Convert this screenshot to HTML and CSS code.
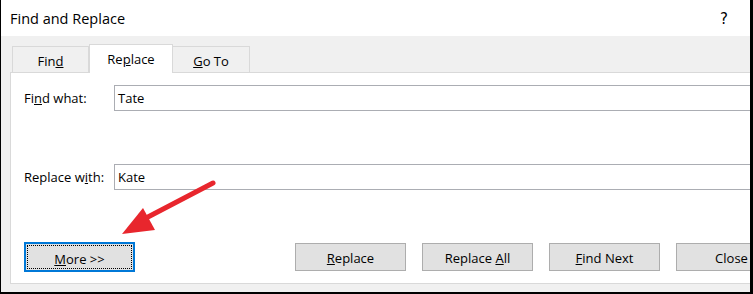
FILE: index.html
```html
<!DOCTYPE html>
<html>
<head>
    <title>Find and Replace</title>
    <link rel="stylesheet" href="styles.css">
</head>
<body>
    <div class="window">
        <div class="titlebar">
            <span class="title">Find and Replace</span>
            <span class="help">?</span>
        </div>
        <div class="content">
            <div class="tabs">
                <div class="tab">Fin<u>d</u></div>
                <div class="tab active">Re<u>p</u>lace</div>
                <div class="tab"><u>G</u>o To</div>
            </div>
            <div class="panel">
                <div class="row first">
                    <label class="label">Fi<u>n</u>d what:</label>
                    <div class="field">Tate</div>
                </div>
                <div class="row second">
                    <label class="label">Replace w<u>i</u>th:</label>
                    <div class="field">Kate</div>
                </div>
                <div class="buttons">
                    <button class="btn more"><span class="focus"><u>M</u>ore &gt;&gt;</span></button>
                    <div class="actions">
                        <button class="btn"><u>R</u>eplace</button>
                        <button class="btn">Replace <u>A</u>ll</button>
                        <button class="btn"><u>F</u>ind Next</button>
                        <button class="btn">Close</button>
                    </div>
                </div>
            </div>
        </div>
        <svg class="arrow" width="753" height="294" viewBox="0 0 753 294">
            <line x1="213" y1="183" x2="146" y2="218" stroke="#e8262d" stroke-width="5" stroke-linecap="round"/>
            <polygon points="122,234 143,208 155,230" fill="#e8262d"/>
        </svg>
    </div>
</body>
</html>
```

FILE: styles.css
```css
body {
    margin: 0;
    font-family: "Open Sans", "Noto Sans", sans-serif;
    color: #000;
}

.window {
    position: relative;
    width: 753px;
    height: 294px;
    box-sizing: border-box;
    border-left: 1px solid #000;
    border-right: 3px solid #000;
    border-bottom: 2px solid #000;
    background-color: #f0f0f0;
    overflow: hidden;
}

.titlebar {
    display: flex;
    align-items: center;
    justify-content: space-between;
    height: 36px;
    background-color: #fff;
    padding: 0 22px 0 9px;
}

.title {
    font-size: 14.5px;
}

.help {
    font-size: 15px;
    font-family: "DejaVu Sans", sans-serif;
    margin-top: 1px;
}

.content {
    padding: 8px 0 0 9px;
}

.tabs {
    display: flex;
    align-items: flex-end;
    padding-left: 2px;
    height: 28px;
    font-size: 13px;
}

.tab {
    box-sizing: border-box;
    width: 77px;
    height: 26px;
    line-height: 28px;
    text-align: center;
    border: 1px solid #d9d9d9;
    border-bottom: none;
    background-color: #f0f0f0;
}

.tab + .tab {
    border-left: none;
}

.tab.active {
    position: relative;
    width: 84px;
    height: 29px;
    margin-bottom: -1px;
    line-height: 29px;
    background-color: #fff;
    border-left: 1px solid #d9d9d9;
}

.tab.active + .tab {
    border-left: none;
}

.panel {
    width: 900px;
    height: 212px;
    box-sizing: border-box;
    background-color: #fff;
    border: 1px solid #d9d9d9;
    padding-left: 13px;
    font-size: 13px;
}

.row {
    display: flex;
    align-items: center;
}

.row.first {
    margin-top: 12px;
}

.row.second {
    margin-top: 53px;
}

.label {
    width: 90px;
}

.field {
    box-sizing: border-box;
    width: 700px;
    height: 26px;
    line-height: 24px;
    padding-left: 3px;
    border: 1px solid #abadb3;
    font-size: 13px;
}

.buttons {
    display: flex;
    align-items: center;
    margin-top: 52px;
}

.btn {
    box-sizing: border-box;
    width: 111px;
    height: 28px;
    padding: 0;
    padding-top: 2px;
    font-family: "Open Sans", "Noto Sans", sans-serif;
    font-size: 13px;
    color: #000;
    background-color: #e1e1e1;
    border: 1px solid #adadad;
}

.btn.more {
    height: 30px;
    border: 2px solid #0078d7;
    padding: 1px;
}

.focus {
    display: block;
    height: 100%;
    box-sizing: border-box;
    line-height: 26px;
    border: 1px dotted #000;
}

.actions {
    display: flex;
    gap: 16px;
    margin-left: 160px;
}

.arrow {
    position: absolute;
    top: 0;
    left: -1px;
    pointer-events: none;
}
```
